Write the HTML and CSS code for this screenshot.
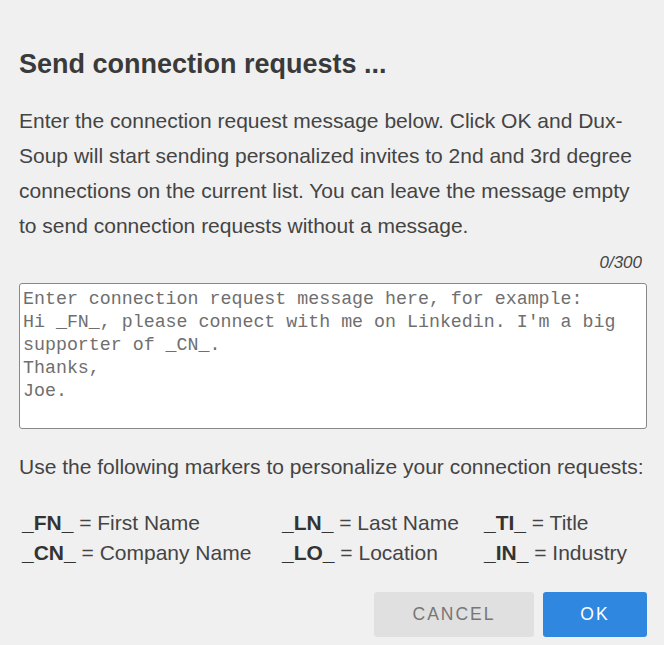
FILE: index.html
```html
<!DOCTYPE html>
<html lang="en">
<head>
  <meta charset="UTF-8" />
  <meta name="viewport" content="width=device-width, initial-scale=1.0" />
  <title>Send connection requests</title>
  <link rel="stylesheet" href="styles.css">
</head>
<body>
  <div class="dialog">
    <h1>Send connection requests ...</h1>

    <p class="intro">Enter the connection request message below. Click OK and Dux-Soup will start sending personalized invites to 2nd and 3rd degree connections on the current list. You can leave the message empty to send connection requests without a message.</p>

    <div class="counter">0/300</div>
    <textarea class="message" placeholder="Enter connection request message here, for example:
Hi _FN_, please connect with me on Linkedin. I'm a big supporter of _CN_.
Thanks,
Joe."></textarea>

    <p class="hint">Use the following markers to personalize your connection requests:</p>

    <div class="markers">
      <div><b>_FN_</b> = First Name</div>
      <div><b>_LN_</b> = Last Name</div>
      <div><b>_TI_</b> = Title</div>
      <div><b>_CN_</b> = Company Name</div>
      <div><b>_LO_</b> = Location</div>
      <div><b>_IN_</b> = Industry</div>
    </div>

    <div class="actions">
      <button class="btn cancel">Cancel</button>
      <button class="btn ok">OK</button>
    </div>
  </div>
</body>
</html>
```

FILE: styles.css
```css
body {
  margin: 0;
  padding: 0;
  background-color: #f0f0f0;
  font-family: "Liberation Sans", Arial, sans-serif;
  color: #444;
}
.dialog {
  padding: 46px 17px 0 19px;
}
h1 {
  margin: 0;
  font-size: 27px;
  font-weight: bold;
  color: #3a3a3a;
  line-height: 36px;
}
.intro {
  margin: 21px 0 0 0;
  font-size: 21px;
  line-height: 35px;
}
.counter {
  text-align: right;
  font-style: italic;
  font-size: 17px;
  margin-top: 10px;
  padding-right: 5px;
  line-height: 20px;
}
.message {
  display: block;
  box-sizing: border-box;
  width: 628px;
  height: 146px;
  margin-top: 10px;
  padding: 4px 3px;
  border: 1px solid #888;
  border-radius: 3px;
  background: #fff;
  font-family: "Liberation Mono", "DejaVu Sans Mono", monospace;
  font-size: 18.3px;
  line-height: 23px;
  resize: none;
}
.message::placeholder {
  color: #6f6f6f;
}
.hint {
  margin: 25px 0 0 0;
  font-size: 21px;
  line-height: 26px;
}
.markers {
  display: grid;
  grid-template-columns: 260px 202px auto;
  row-gap: 4px;
  margin: 30px 0 0 3px;
  font-size: 21px;
  line-height: 26px;
}
.markers b {
  color: #333;
}
.actions {
  display: flex;
  justify-content: flex-end;
  gap: 9px;
  margin-top: 26px;
}
.btn {
  height: 45px;
  border: none;
  border-radius: 3px;
  font-family: "Liberation Sans", Arial, sans-serif;
  font-size: 17.5px;
  letter-spacing: 2px;
  text-transform: uppercase;
  cursor: pointer;
}
.cancel {
  width: 160px;
  background-color: #e0e0e0;
  color: #777;
}
.ok {
  width: 104px;
  background-color: #2f87e0;
  color: #fff;
}
```
